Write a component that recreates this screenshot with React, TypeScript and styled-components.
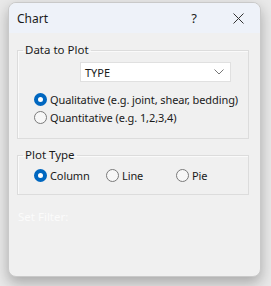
import styled, { createGlobalStyle } from "styled-components";

const Global = createGlobalStyle`
  html, body {
    margin: 0;
    padding: 0;
    background: #e9e9e9;
    font-family: "Noto Sans", "Open Sans", sans-serif;
  }
`;

const Page = styled.div`
  width: 271px;
  height: 286px;
  padding: 2px 0 0 8px;
  box-sizing: border-box;
`;

const Window = styled.div`
  width: 253px;
  height: 275px;
  box-sizing: border-box;
  border: 1px solid #c9c9c9;
  border-radius: 8px;
  background: #f0f0f0;
  box-shadow: 0 6px 14px rgba(0, 0, 0, 0.28);
  overflow: hidden;
  display: flex;
  flex-direction: column;
`;

const TitleBar = styled.div`
  height: 30px;
  background: #eef2f9;
  display: flex;
  align-items: center;
  padding-left: 8px;
  font-size: 12px;
  color: #1a1a1a;
`;

const Title = styled.span`
  flex: 1;
`;

const TitleButton = styled.span`
  width: 44px;
  display: flex;
  justify-content: center;
  font-size: 13px;
  color: #222;
`;

const Body = styled.div`
  display: flex;
  flex-direction: column;
  padding: 9px 11px 0 8px;
  gap: 8px;
  font-size: 11px;
  color: #1a1a1a;
`;

const Group = styled.fieldset<{ pad: string }>`
  margin: 0;
  padding: ${(p) => p.pad};
  border: 1px solid #dcdcdc;
  border-radius: 0;
  box-shadow: inset 1px 1px 0 #fafafa;
  min-width: 0;
`;

const Legend = styled.legend`
  padding: 0 2px;
  margin-left: 5px;
  line-height: 16px;
  font-size: 11.5px;
`;

const SelectBox = styled.div`
  margin-left: 62px;
  width: 151px;
  height: 20px;
  box-sizing: border-box;
  border: 1px solid #e0e0e0;
  background: #fff;
  display: flex;
  align-items: center;
  justify-content: space-between;
  padding: 0 6px 0 4px;
  font-size: 11px;
`;

const RadioList = styled.div`
  margin-top: 8px;
  display: flex;
  flex-direction: column;
`;

const RadioRow = styled.div<{ cols?: string }>`
  display: grid;
  grid-template-columns: ${(p) => p.cols || "1fr"};
  padding-left: 16px;
`;

const RadioItem = styled.label`
  display: flex;
  align-items: center;
  height: 18px;
  gap: 3px;
  white-space: nowrap;
  letter-spacing: -0.1px;
`;

const Circle = styled.span<{ checked?: boolean }>`
  width: 13px;
  height: 13px;
  box-sizing: border-box;
  border-radius: 50%;
  flex-shrink: 0;
  border: ${(p) => (p.checked ? "4px solid #0067c0" : "1px solid #7a7a7a")};
  background: ${(p) => (p.checked ? "#fff" : "#f7f7f7")};
`;

const Disabled = styled.div`
  margin-top: 6px;
  padding-left: 1px;
  color: #fbfbfb;
  font-size: 11.5px;
`;

const Radio = ({ label, checked }: { label: string; checked?: boolean }) => (
  <RadioItem>
    <Circle checked={checked} />
    {label}
  </RadioItem>
);

export default function App() {
  return (
    <Page>
      <Global />
      <Window>
        <TitleBar>
          <Title>Chart</Title>
          <TitleButton>?</TitleButton>
          <TitleButton>
            <svg width="11" height="11" viewBox="0 0 11 11">
              <path d="M0.5 0.5 L10.5 10.5 M10.5 0.5 L0.5 10.5" stroke="#333" strokeWidth="1" />
            </svg>
          </TitleButton>
        </TitleBar>
        <Body>
          <Group pad="4px 0 12px 0">
            <Legend>Data to Plot</Legend>
            <SelectBox>
              <span>TYPE</span>
              <svg width="10" height="6" viewBox="0 0 10 6">
                <path d="M0.5 0.5 L5 5 L9.5 0.5" fill="none" stroke="#777" strokeWidth="1" />
              </svg>
            </SelectBox>
            <RadioList>
              <RadioRow>
                <Radio checked label="Qualitative (e.g. joint, shear, bedding)" />
              </RadioRow>
              <RadioRow>
                <Radio label="Quantitative (e.g. 1,2,3,4)" />
              </RadioRow>
            </RadioList>
          </Group>
          <Group pad="3px 0 10px 0">
            <Legend>Plot Type</Legend>
            <RadioRow cols="72px 70px 1fr">
              <Radio checked label="Column" />
              <Radio label="Line" />
              <Radio label="Pie" />
            </RadioRow>
          </Group>
          <Disabled>Set Filter:</Disabled>
        </Body>
      </Window>
    </Page>
  );
}
